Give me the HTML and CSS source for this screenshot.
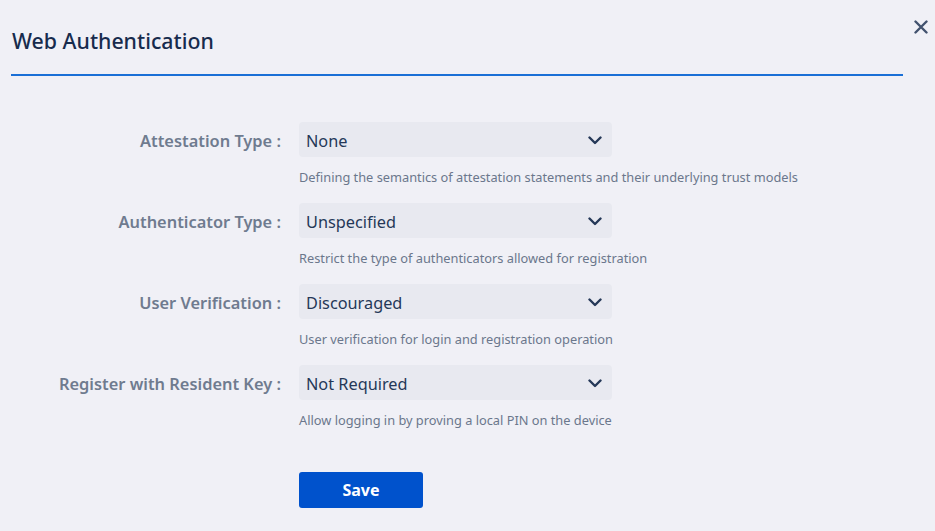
FILE: index.html
```html
<!DOCTYPE html>
<html lang="en">
<head>
    <meta charset="UTF-8">
    <meta name="viewport" content="width=device-width, initial-scale=1.0">
    <title>Web Authentication</title>
    <link rel="stylesheet" href="styles.css">
</head>
<body>
    <div class="modal">
        <div class="modal-header">
            <div class="modal-title">Web Authentication</div>
            <span class="close-btn">
                <svg width="14" height="14" viewBox="0 0 14 14"><path d="M1.5 1.5 L12.5 12.5 M12.5 1.5 L1.5 12.5" stroke="#42526e" stroke-width="2.4" stroke-linecap="round"/></svg>
            </span>
        </div>
        <div class="form">
            <div class="form-label">Attestation Type :</div>
            <div class="form-field">
                <div class="select"><span>None</span><svg class="chevron" width="14" height="9" viewBox="0 0 14 9"><path d="M1.5 1.5 L7 7 L12.5 1.5" fill="none" stroke="#253858" stroke-width="2.4" stroke-linecap="round" stroke-linejoin="round"/></svg></div>
                <div class="help">Defining the semantics of attestation statements and their underlying trust models</div>
            </div>

            <div class="form-label">Authenticator Type :</div>
            <div class="form-field">
                <div class="select"><span>Unspecified</span><svg class="chevron" width="14" height="9" viewBox="0 0 14 9"><path d="M1.5 1.5 L7 7 L12.5 1.5" fill="none" stroke="#253858" stroke-width="2.4" stroke-linecap="round" stroke-linejoin="round"/></svg></div>
                <div class="help">Restrict the type of authenticators allowed for registration</div>
            </div>

            <div class="form-label">User Verification :</div>
            <div class="form-field">
                <div class="select"><span>Discouraged</span><svg class="chevron" width="14" height="9" viewBox="0 0 14 9"><path d="M1.5 1.5 L7 7 L12.5 1.5" fill="none" stroke="#253858" stroke-width="2.4" stroke-linecap="round" stroke-linejoin="round"/></svg></div>
                <div class="help">User verification for login and registration operation</div>
            </div>

            <div class="form-label">Register with Resident Key :</div>
            <div class="form-field">
                <div class="select"><span>Not Required</span><svg class="chevron" width="14" height="9" viewBox="0 0 14 9"><path d="M1.5 1.5 L7 7 L12.5 1.5" fill="none" stroke="#253858" stroke-width="2.4" stroke-linecap="round" stroke-linejoin="round"/></svg></div>
                <div class="help">Allow logging in by proving a local PIN on the device</div>
            </div>

            <div></div>
            <div class="actions">
                <button class="save-btn">Save</button>
            </div>
        </div>
    </div>
</body>
</html>
```

FILE: styles.css
```css
body, html {
    margin: 0;
    padding: 0;
    background-color: #f0f0f6;
    font-family: "Noto Sans", "Open Sans", sans-serif;
    color: #172b4d;
}
.modal {
    width: 935px;
    height: 531px;
    box-sizing: border-box;
    padding: 0 32px 0 11px;
}
.modal-header {
    position: relative;
    padding-top: 26px;
    height: 48px;
    border-bottom: 2px solid #1a6fd6;
}
.modal-title {
    font-size: 21.3px;
    font-weight: 500;
    margin-left: 1px;
    line-height: 30px;
    color: #172b4d;
}
.close-btn {
    position: absolute;
    top: 20px;
    right: -25px;
    width: 14px;
    height: 14px;
}
.close-btn svg {
    display: block;
}
.form {
    display: grid;
    grid-template-columns: 270px 313px;
    column-gap: 18px;
    row-gap: 17px;
    margin-top: 46px;
}
.form-label {
    text-align: right;
    font-size: 16.4px;
    font-weight: 600;
    color: #6f7b8f;
    line-height: 37px;
}
.form-field {
    display: flex;
    flex-direction: column;
}
.select {
    height: 35px;
    box-sizing: border-box;
    background-color: #e8e9f0;
    border-radius: 4px;
    display: flex;
    align-items: center;
    justify-content: space-between;
    padding: 2px 10px 0 7px;
    font-size: 16.3px;
    color: #253858;
}
.chevron {
    display: block;
}
.help {
    margin-top: 12px;
    font-size: 12.8px;
    line-height: 17px;
    color: #6b778c;
    white-space: nowrap;
}
.actions {
    padding-top: 26px;
}
.save-btn {
    width: 124px;
    height: 36px;
    border: none;
    border-radius: 3px;
    background-color: #0052cc;
    color: white;
    font-family: "Noto Sans", "Open Sans", sans-serif;
    font-size: 16px;
    font-weight: 700;
    padding: 0;
}
```
